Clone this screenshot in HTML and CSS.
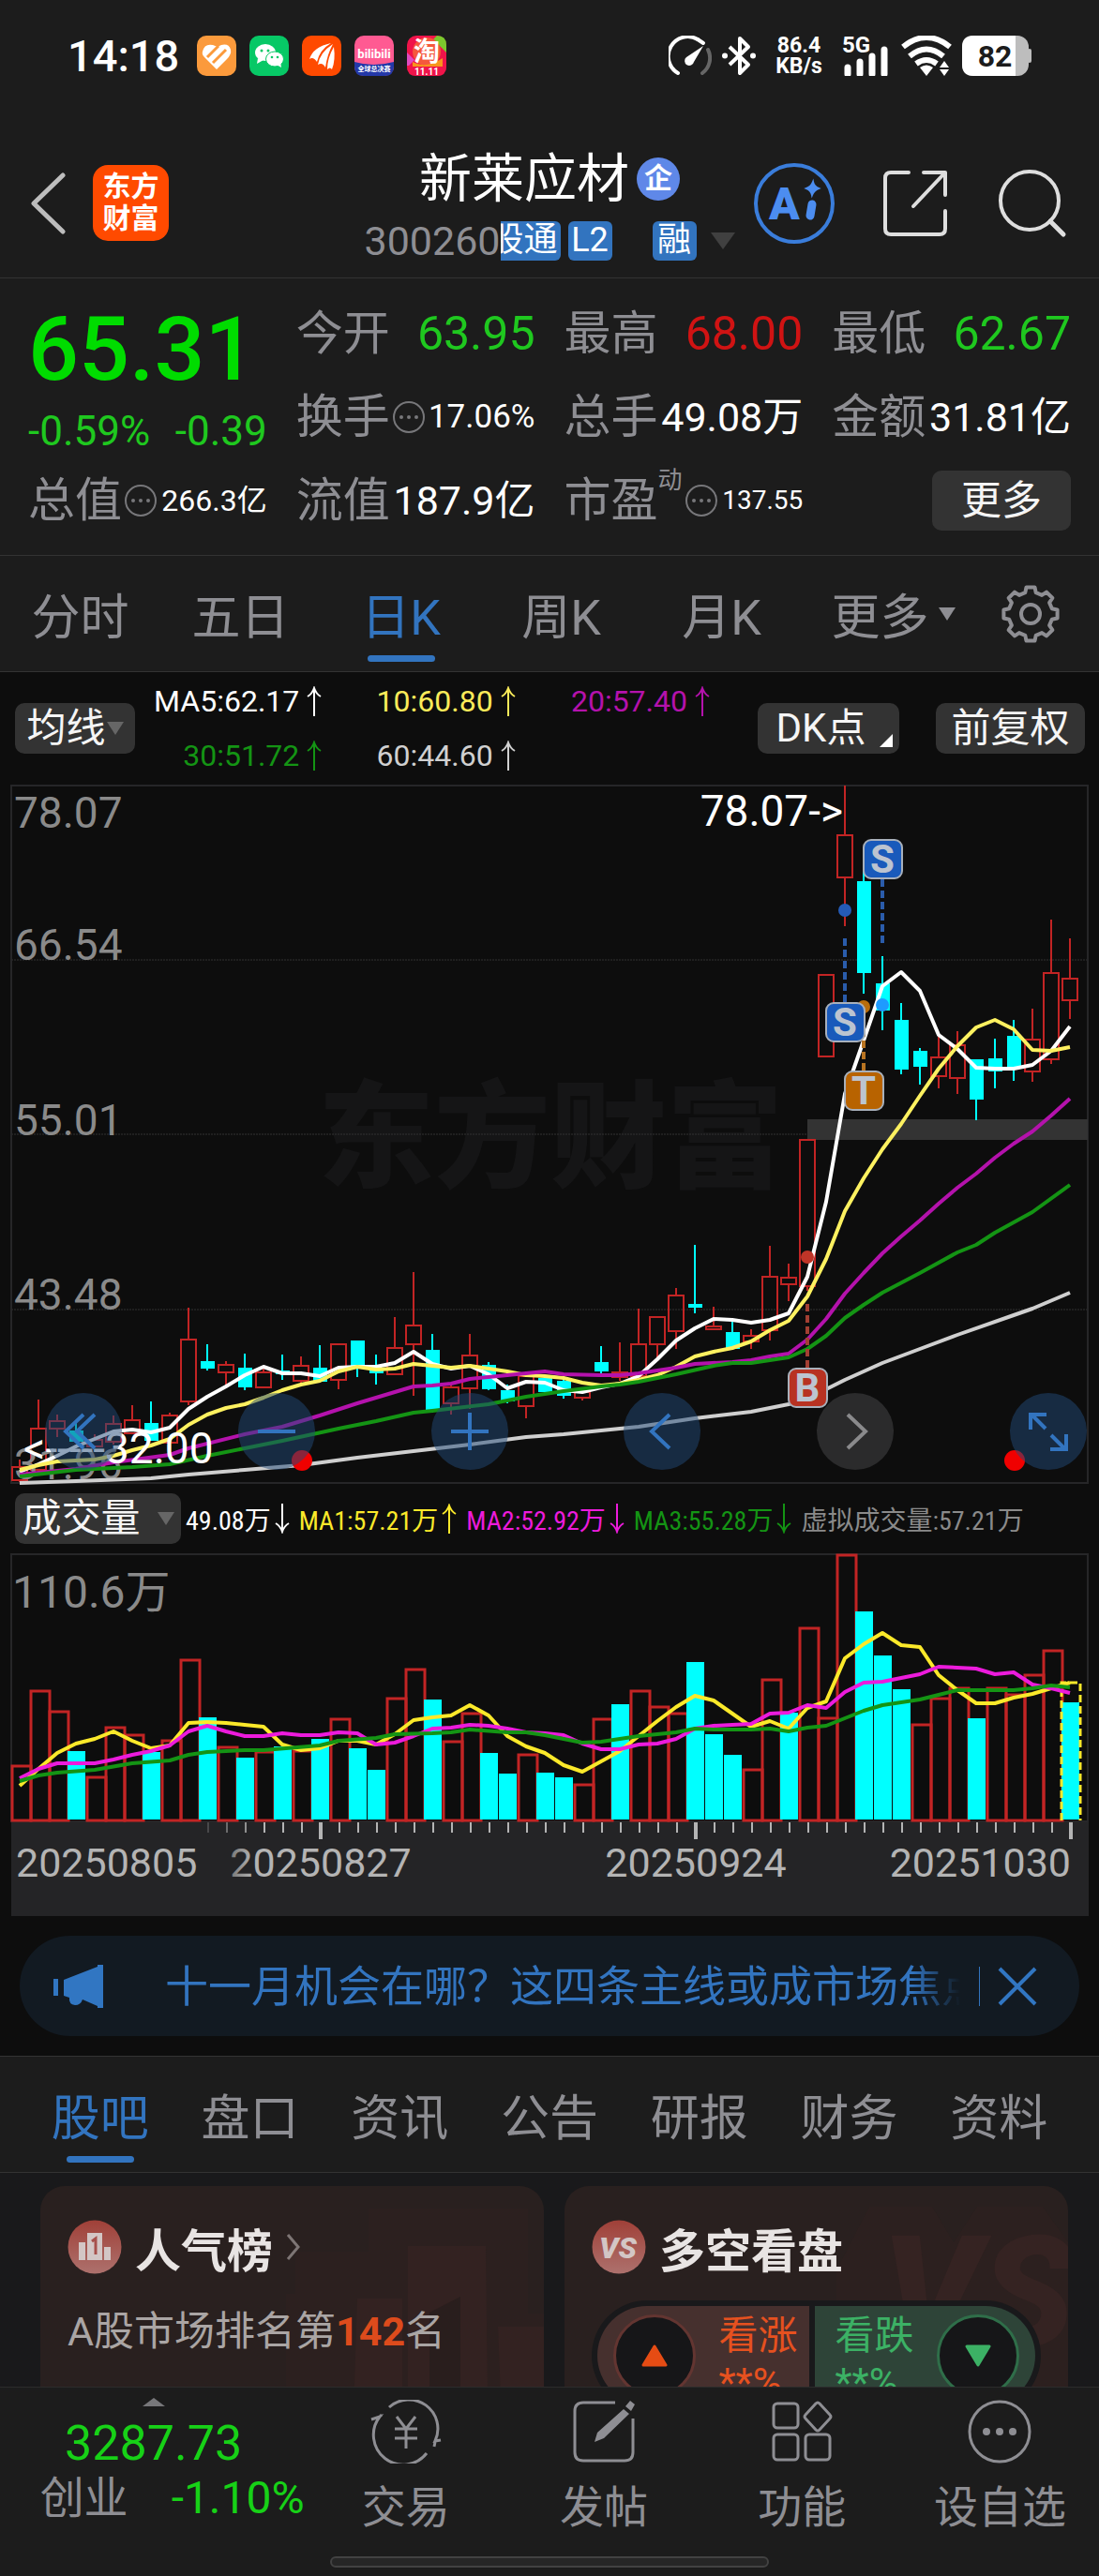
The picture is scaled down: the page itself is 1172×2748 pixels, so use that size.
FILE: index.html
```html
<!DOCTYPE html>
<html lang="zh-CN">
<head>
<meta charset="utf-8">
<meta name="viewport" content="width=device-width, initial-scale=1">
<title>新莱应材 300260</title>
<link rel="stylesheet" href="styles.css">
</head>
<body>
<svg class="defs" aria-hidden="true">
  <symbol id="up" viewBox="0 0 16 32"><path d="M8 32V2M1 11Q6 8 8 2Q10 8 15 11" fill="none" stroke="currentColor" stroke-width="2"/></symbol>
  <symbol id="down" viewBox="0 0 16 32"><path d="M8 0V30M1 21Q6 24 8 30Q10 24 15 21" fill="none" stroke="currentColor" stroke-width="2"/></symbol>
  <symbol id="info" viewBox="0 0 36 36"><circle cx="18" cy="18" r="16" fill="none" stroke="#77777a" stroke-width="2"/><g fill="#77777a"><circle cx="10" cy="18" r="2"/><circle cx="18" cy="18" r="2"/><circle cx="26" cy="18" r="2"/></g></symbol>
</svg>

<div class="status">
  <span class="clock">14:18</span>
  <div class="apps">
    <svg viewBox="0 0 42 43"><rect width="42" height="43" rx="10" fill="#fb9a3c"/><path d="M6 17Q8 8 17 10L22 12L26 10Q34 8 36 15Q37 20 32 25L21 36L8 23Q5 20 6 17Z" fill="#fff"/><path d="M11 23L23 11M17 29L31 15" stroke="#fb9a3c" stroke-width="3"/></svg>
    <svg viewBox="0 0 42 43"><rect width="42" height="43" rx="10" fill="#07c866"/><ellipse cx="17" cy="18" rx="11" ry="9" fill="#fff"/><path d="M9 24L8 30L15 26" fill="#fff"/><ellipse cx="27" cy="25" rx="9.500" ry="8" fill="#fff" stroke="#07c866"/><path d="M29 31L34 34L33 28" fill="#fff"/><g fill="#07c866"><circle cx="13" cy="16" r="1.500"/><circle cx="20" cy="16" r="1.500"/><circle cx="24" cy="23" r="1.300"/><circle cx="30" cy="23" r="1.300"/></g></svg>
    <svg viewBox="0 0 42 43"><rect width="42" height="43" rx="10" fill="#ff4a00"/><path d="M8 25Q12 12 31 8Q19 15 16 28Q12 22 8 25ZM17 31Q19 18 33 9Q27 20 25 34Q22 28 17 31ZM27 36Q27 24 34 12Q36 26 32 36Q30 33 27 36Z" fill="#fff"/></svg>
    <svg viewBox="0 0 42 43"><rect width="42" height="43" rx="10" fill="#ff5a92"/><path d="M0 28Q20 34 42 28V33Q42 43 32 43H10Q0 43 0 33Z" fill="#2338a8"/><text x="21" y="24" class="bili">bilibili</text><text x="21" y="38" class="bili-sub">全球总决赛</text></svg>
    <svg viewBox="0 0 42 43"><rect width="42" height="43" rx="10" fill="#f0144a"/><path d="M32 0Q42 0 42 10V18L28 4Z" fill="#7bc82d"/><path d="M0 18L8 26L2 32H0Z" fill="#e04bc0"/><circle cx="21" cy="17" r="15" fill="#f5583c"/><path d="M6 28Q20 36 38 24V34H6Z" fill="#f7951d"/><text x="21" y="27" class="tao">淘</text><path d="M0 33H42Q42 43 32 43H10Q0 43 0 33Z" fill="#f0144a"/><text x="21" y="42" class="tao-sub">11.11</text></svg>
  </div>
  <div class="signals">
    <svg class="gauge" viewBox="0 0 46 43"><path d="M10 40A20 20 0 0 1 31 4" fill="none" stroke="#fff" stroke-width="4" stroke-linecap="round"/><path d="M31 4L37 8" stroke="#fff" stroke-width="4" stroke-linecap="round"/><path d="M42 15A20 20 0 0 1 36 40" fill="none" stroke="#666" stroke-width="4" stroke-linecap="round"/><path d="M37 11L19 23A5 5 0 1 0 27 28Z" fill="#fff"/></svg>
    <svg class="bt" viewBox="0 0 36 43"><path d="M8 12L28 31L19 40V3L28 12L8 31" fill="none" stroke="#fff" stroke-width="4" stroke-linejoin="round"/><g fill="#fff"><circle cx="3" cy="21.500" r="3"/><circle cx="33" cy="21.500" r="3"/></g></svg>
    <span class="speed">86.4<br>KB/s</span>
    <svg class="cell" viewBox="0 0 52 43"><text x="0" y="18">5G</text><path d="M6 41V34M19 41V28M32 41V22M45 41V15" stroke="#fff" stroke-width="7" stroke-linecap="round"/></svg>
    <svg class="wifi" viewBox="0 0 54 43"><g fill="none" stroke="#fff" stroke-width="6"><path d="M2 12Q27 -8 52 12"/><path d="M9 22Q27 7 45 22"/><path d="M16 30Q27 22 38 30"/></g><path d="M20 34Q27 29 34 34L27 43ZM41 34L46 27L51 34ZM41 36L46 43L51 36Z" fill="#fff"/></svg>
    <svg class="battery" viewBox="0 0 74 43"><rect width="71" height="43" rx="12" fill="#bdbdbd"/><rect x="70" y="14" width="4" height="15" rx="2" fill="#bdbdbd"/><path d="M12 0H57V43H12Q0 43 0 31V12Q0 0 12 0Z" fill="#fff"/><text x="35" y="33">82</text></svg>
  </div>
</div>

<header class="header">
  <div class="header-left">
    <button class="plain" aria-label="返回"><svg width="38" height="66" viewBox="0 0 38 66"><path d="M35 3L4 33L35 63" fill="none" stroke="#bdbdbd" stroke-width="5" stroke-linecap="round" stroke-linejoin="round"/></svg></button>
    <a class="logo" href="#">东方<br>财富</a>
  </div>
  <div class="header-mid">
    <h1>新莱应材<span class="ent">企</span></h1>
    <div class="code">300260<span class="tag tag-cut"><span>股通</span></span><span class="tag">L2</span><span class="tag tag-rong">融</span><i class="tri tri-code"></i></div>
  </div>
  <div class="header-right">
    <button class="plain" aria-label="AI"><svg width="86" height="86" viewBox="0 0 86 86"><circle cx="43" cy="43" r="41" fill="none" stroke="#3a7ddb" stroke-width="4"/><text x="16" y="60" class="ai">A</text><path d="M62 44L60 56" stroke="#4c8df0" stroke-width="9" stroke-linecap="round"/><path d="M63 20Q64 25 69 27Q64 29 62 34Q61 29 56 27Q61 25 63 20Z" fill="#4c8df0" stroke="#4c8df0" stroke-width="2"/></svg></button>
    <button class="plain" aria-label="分享"><svg width="72" height="72" viewBox="0 0 72 72"><path d="M28 3H9Q3 3 3 9V63Q3 69 9 69H61Q67 69 67 63V44M44 3H67V27M67 3L33 39" fill="none" stroke="#dedede" stroke-width="4" stroke-linecap="round" stroke-linejoin="round"/></svg></button>
    <button class="plain" aria-label="搜索"><svg width="74" height="74" viewBox="0 0 74 74"><circle cx="34" cy="34" r="31" fill="none" stroke="#dedede" stroke-width="4"/><path d="M56 56L70 70" stroke="#dedede" stroke-width="5" stroke-linecap="round"/></svg></button>
  </div>
</header>

<main>
<section class="quote">
  <div class="last">
    <strong>65.31</strong>
    <div class="change"><span>-0.59%</span><span>-0.39</span></div>
  </div>
  <div class="stat"><span>今开</span><b class="green big">63.95</b></div>
  <div class="stat"><span>最高</span><b class="red big">68.00</b></div>
  <div class="stat"><span>最低</span><b class="green big">62.67</b></div>
  <div class="stat"><span>换手<svg class="info"><use href="#info"/></svg></span><b class="small">17.06%</b></div>
  <div class="stat"><span>总手</span><b>49.08万</b></div>
  <div class="stat"><span>金额</span><b>31.81亿</b></div>
  <div class="stat"><span>总值<svg class="info"><use href="#info"/></svg></span><b class="smaller">266.3亿</b></div>
  <div class="stat"><span>流值</span><b>187.9亿</b></div>
  <div class="stat"><span>市盈<sup>动</sup><svg class="info"><use href="#info"/></svg></span><b class="tiny">137.55</b></div>
  <div class="stat stat-more"><button class="chip chip-more">更多</button></div>
</section>

<nav class="periods">
  <button>分时</button><button>五日</button><button class="active">日K</button><button>周K</button><button>月K</button>
  <button class="more">更多<i class="tri"></i></button>
  <button aria-label="设置"><svg width="62" height="62" viewBox="-31 -31 62 62"><path d="M-5.700-22.800L-4.500-28.600H4.500L5.700-22.800L12.100-20.100L17-23.400L23.400-17L20.100-12.100L22.800-5.700L28.600-4.500V4.500L22.800 5.700L20.100 12.100L23.400 17L17 23.400L12.100 20.100L5.700 22.800L4.500 28.600H-4.500L-5.700 22.800L-12.100 20.100L-17 23.400L-23.400 17L-20.100 12.100L-22.800 5.700L-28.600 4.500V-4.500L-22.800-5.700L-20.100-12.100L-23.400-17L-17-23.400L-12.100-20.100Z" fill="none" stroke="#8e8e93" stroke-width="4" stroke-linejoin="round"/><circle r="10" fill="none" stroke="#8e8e93" stroke-width="4"/></svg></button>
</nav>

<div class="ma-row">
  <button class="chip">均线<i class="tri"></i></button>
  <div class="ma-list">
    <span class="c-white">MA5:62.17<svg class="arrow"><use href="#up"/></svg></span>
    <span class="c-yellow">10:60.80<svg class="arrow"><use href="#up"/></svg></span>
    <span class="c-purple">20:57.40<svg class="arrow"><use href="#up"/></svg></span>
    <span class="c-green">30:51.72<svg class="arrow"><use href="#up"/></svg></span>
    <span class="c-gray">60:44.60<svg class="arrow"><use href="#up"/></svg></span>
  </div>
  <button class="chip chip-dk">DK点<i class="corner"></i></button>
  <button class="chip chip-fq">前复权</button>
</div>

<div class="kchart">
  <svg viewBox="0 830 1172 760" role="img" aria-label="日K线">
    <text class="watermark" x="587" y="1257">东方财富</text>
    <g fill="none" stroke="#262628"><path d="M12 1024H1160M12 1210H1160M12 1397H1160" stroke="#333" stroke-dasharray="2 1"/><rect x="12" y="838" width="1148" height="744" stroke-width="2"/></g>
    <rect x="861" y="1194" width="299" height="22" fill="#333"/>
    <g id="candles"></g>
    <g class="axis"><text x="15" y="883">78.07</text><text x="15" y="1024">66.54</text><text x="15" y="1211">55.01</text><text x="15" y="1397">43.48</text><text x="15" y="1578">31.96</text></g>
    <g id="averages"></g>
    <g class="peak"><text x="899" y="881" text-anchor="end">78.07-&gt;</text><text x="25" y="1561">&lt;-----32.00</text></g>
    <g class="marks">
      <path d="M941 938V1006M901 1001V1069" stroke="#2a5cab"/><path d="M921 1074V1142" stroke="#b87422"/><path d="M861 1391V1459" stroke="#a33f33"/>
      <circle cx="901" cy="971" r="7" fill="#245bb8"/><circle cx="921" cy="1074" r="7" fill="#b96d0c"/><circle cx="941" cy="1072" r="7" fill="#1e9bff"/><circle cx="861" cy="1341" r="7" fill="#c03528"/>
      <rect x="921" y="896" width="41" height="41" rx="8" fill="#195abb"/><text x="941" y="931">S</text>
      <rect x="881" y="1070" width="41" height="41" rx="8" fill="#195abb"/><text x="901" y="1105">S</text>
      <rect x="901" y="1143" width="41" height="41" rx="8" fill="#b86300"/><text x="921" y="1178">T</text>
      <rect x="841" y="1460" width="41" height="41" rx="8" fill="#b83222"/><text x="861" y="1495">B</text>
    </g>
    <circle cx="322" cy="1558" r="11" fill="#f00000"/><circle cx="1082" cy="1558" r="11" fill="#f00000"/>
  </svg>
  <div class="tools">
    <button aria-label="更早"><svg viewBox="0 0 82 82"><path d="M41 23L22 41L41 59M53 23L34 41L53 59"/></svg></button>
    <button aria-label="缩小"><svg viewBox="0 0 82 82"><path d="M21 41H61"/></svg></button>
    <button aria-label="放大"><svg viewBox="0 0 82 82"><path d="M21 41H61M41 21V61"/></svg></button>
    <button aria-label="左移"><svg viewBox="0 0 82 82"><path d="M49 23L30 41L49 59"/></svg></button>
    <button class="off" aria-label="右移"><svg viewBox="0 0 82 82"><path d="M33 23L52 41L33 59"/></svg></button>
    <button aria-label="全屏"><svg viewBox="0 0 82 82"><path d="M22 39V23H39M23 23L38 38M60 44V60H43M59 60L44 45"/></svg></button>
  </div>
</div>

<div class="vol-row">
  <button class="chip chip-vol">成交量<i class="tri"></i></button>
  <span class="c-white">49.08万<svg class="arrow"><use href="#down"/></svg></span>
  <span class="v-yellow">MA1:57.21万<svg class="arrow"><use href="#up"/></svg></span>
  <span class="v-pink">MA2:52.92万<svg class="arrow"><use href="#down"/></svg></span>
  <span class="c-green">MA3:55.28万<svg class="arrow"><use href="#down"/></svg></span>
  <span class="v-gray">虚拟成交量:57.21万</span>
</div>

<svg class="vchart" viewBox="0 1650 1172 394" role="img" aria-label="成交量">
  <defs><linearGradient id="fade"><stop offset="0" stop-color="#777"/><stop offset=".13" stop-color="#b4b4b4"/></linearGradient></defs>
  <rect x="12" y="1658" width="1148" height="285" fill="none" stroke="#262628" stroke-width="2"/>
  <rect x="12" y="1944" width="1149" height="100" fill="#242426"/>
  <g id="volumes"></g>
  <text class="vol-max" x="13" y="1715">110.6万</text>
  <g id="ticks"></g>
  <g class="dates"><text x="17" y="2002">20250805</text><text x="342" y="2002" text-anchor="middle" fill="url(#fade)">20250827</text><text x="742" y="2002" text-anchor="middle">20250924</text><text x="1142" y="2002" text-anchor="end">20251030</text></g>
</svg>

<div class="notice">
  <svg width="56" height="48" viewBox="0 0 56 48"><path d="M1 16H6V34H1ZM12 17L48 3V1H54V47H48V45L32 38Q30 44 24 44Q17 43 18 36L12 34Z" fill="#3176c2"/></svg>
  <a href="#">十一月机会在哪？这四条主线或成市场焦点</a>
  <button class="plain" aria-label="关闭"><svg width="42" height="42" viewBox="0 0 42 42"><path d="M2 2L40 40M40 2L2 40" stroke="#3176c2" stroke-width="4"/></svg></button>
</div>

<nav class="topics">
  <button class="active">股吧</button><button>盘口</button><button>资讯</button><button>公告</button><button>研报</button><button>财务</button><button>资料</button>
</nav>

<section class="cards">
  <article class="card">
    <svg class="card-art" viewBox="0 0 537 300"><path d="M272 70H350V24H520V136H537V300H262V115H272Z" fill="#2c201f"/><path d="M338 120H386V300H332ZM392 64H475L478 300H392ZM488 150H537V300H494Z" fill="#332221"/><path d="M415 135L448 118V300H415Z" fill="#291e1d"/></svg>
    <h2><svg width="58" height="58" viewBox="0 0 58 58"><circle cx="29" cy="29" r="28.500" fill="url(#ball)"/><path d="M12 24H19V43H12ZM21 14H37V43H21ZM39 29H46V43H39Z" fill="#d3c6c5"/><path d="M26 23L30 20V37" fill="none" stroke="#a7504b" stroke-width="3"/></svg>人气榜<svg width="16" height="30" viewBox="0 0 16 30"><path d="M2 2L13 15L2 28" fill="none" stroke="#7d7574" stroke-width="3"/></svg></h2>
    <p>A股市场排名第<b>142</b>名</p>
  </article>
  <article class="card">
    <svg class="card-art" viewBox="0 0 537 300"><defs><linearGradient id="ball" x1="0" x2="0" y1="0" y2="1"><stop stop-color="#a04038"/><stop offset="1" stop-color="#ad716d"/></linearGradient></defs><path d="M325 22H392L415 60L440 22H510L537 60V300H290V90Z" fill="#2c201f"/><text class="vs-art" x="338" y="170">VS</text></svg>
    <h2><svg width="58" height="58" viewBox="0 0 58 58"><circle cx="29" cy="29" r="28.500" fill="url(#ball)"/><text class="vs" x="28" y="41">VS</text></svg>多空看盘</h2>
    <div class="vote">
      <button class="rise"><i><svg width="28" height="24" viewBox="0 0 28 24"><path d="M14 2L26 22H2Z" fill="#e64c14" stroke="#e64c14" stroke-width="3" stroke-linejoin="round"/></svg></i><span>看涨<br>**%</span></button>
      <button class="fall"><span>看跌<br>**%</span><i><svg width="28" height="24" viewBox="0 0 28 24"><path d="M14 22L26 2H2Z" fill="#3cb165" stroke="#3cb165" stroke-width="3" stroke-linejoin="round"/></svg></i></button>
    </div>
  </article>
</section>
</main>

<footer class="dock">
  <div class="dock-row">
    <button class="index"><i class="caret"></i><span>3287.73</span><span class="index-row"><em>创业</em>-1.10%</span></button>
    <button><svg width="76" height="68" viewBox="0 0 76 68"><g fill="none" stroke="#8e8e93" stroke-width="3"><path d="M20 8A31 31 0 0 1 69 44L75 43M69 45L68 50M60 57A31 31 0 0 1 10 18L1 21M10 18L12 16"/><path d="M28 18L38 31L48 18M38 31V52M26 31H50M26 41H50"/></g></svg>交易</button>
    <button><svg width="68" height="68" viewBox="0 0 68 68"><path d="M46 3H12Q3 3 3 12V56Q3 65 12 65H56Q65 65 65 56V20" fill="none" stroke="#8e8e93" stroke-width="3"/><path d="M57 7L62 1L67 5L63 12ZM55 10L61 15L34 41L24 45L27 35Z" fill="#8e8e93"/></svg>发帖</button>
    <button><svg width="68" height="68" viewBox="0 0 68 68"><g fill="none" stroke="#8e8e93" stroke-width="3"><rect x="4" y="4" width="26" height="26" rx="4"/><rect x="4" y="37" width="26" height="27" rx="4"/><rect x="38" y="37" width="26" height="27" rx="4"/><path d="M49 4Q51 2 53 4L64 16Q66 18 64 20L53 32Q51 34 49 32L38 20Q36 18 38 16Z"/></g></svg>功能</button>
    <button><svg width="68" height="68" viewBox="0 0 68 68"><circle cx="34" cy="34" r="32" fill="none" stroke="#8e8e93" stroke-width="3"/><g fill="#8e8e93"><circle cx="20" cy="34" r="4"/><circle cx="34" cy="34" r="4"/><circle cx="48" cy="34" r="4"/></g></svg>设自选</button>
  </div>
  <div class="home-bar"></div>
</footer>
<script src="chart.js"></script>
</body>
</html>
```
FILE: styles.css
```css
* { box-sizing: border-box; }
body {
  margin: 0;
  min-height: 100vh;
  display: flex;
  flex-direction: column;
  background: #0d0d0d;
  color: #fff;
  font-family: Roboto, "Noto Sans CJK SC", sans-serif;
}
main { flex: 1; display: flex; flex-direction: column; }
h1, h2, p { margin: 0; font-weight: 400; }
i, em { font-style: normal; }
svg { display: block; flex: none; }
button { margin: 0; padding: 0; border: 0; background: none; color: inherit; font: inherit; cursor: pointer; }
a { color: inherit; text-decoration: none; }
.defs { position: absolute; width: 0; height: 0; }
.plain { display: block; }

.tri { width: 0; height: 0; border: 9px solid transparent; border-top: 14px solid #8e8e93; border-bottom: 0; }

/* status bar */
.status { display: flex; align-items: center; height: 119px; padding: 0 72px; background: #1c1c1c; }
.clock { width: 138px; font-size: 47px; font-weight: 500; line-height: 56px; }
.apps { display: flex; gap: 14px; }
.apps svg { width: 42px; height: 43px; }
.bili { font-size: 13px; font-weight: 700; fill: #fff; text-anchor: middle; }
.bili-sub { font-size: 7px; font-weight: 700; fill: #fff; text-anchor: middle; }
.tao { font-size: 28px; font-weight: 700; fill: #fff; text-anchor: middle; }
.tao-sub { font-size: 10px; font-weight: 700; fill: #fff; text-anchor: middle; }
.signals { display: flex; align-items: center; gap: 11px; margin-left: auto; }
.gauge { width: 46px; height: 43px; }
.bt { width: 36px; height: 43px; }
.speed { width: 70px; font-size: 23px; font-weight: 700; line-height: 22px; text-align: center; }
.cell { width: 52px; height: 43px; font-size: 24px; font-weight: 700; fill: #fff; }
.wifi { width: 54px; height: 43px; }
.battery { width: 74px; height: 43px; font-size: 32px; font-weight: 700; fill: #1c1c1c; text-anchor: middle; }

/* title bar */
.header { display: grid; grid-template-columns: 1fr auto 1fr; align-items: center; height: 178px; padding-top: 18px; background: #1c1c1c; border-bottom: 1px solid #333; }
.header-left { display: flex; align-items: center; gap: 29px; padding-left: 32px; }
.logo { width: 81px; height: 81px; padding-top: 6px; border-radius: 16px; background: #ff4a00; font-size: 30px; font-weight: 700; line-height: 34px; text-align: center; }
.header-mid { align-self: end; padding-bottom: 16px; }
h1 { display: flex; justify-content: center; align-items: center; gap: 8px; font-size: 56px; line-height: 62px; }
.ent { width: 46px; height: 46px; border-radius: 50%; background: #5f88e8; font-size: 30px; font-weight: 700; line-height: 44px; text-align: center; }
.code { display: flex; align-items: center; margin-top: 12px; color: #8e8e93; font-size: 43px; line-height: 46px; }
.tag { width: 47px; height: 42px; margin-right: 8px; border-radius: 6px; background: #3274bf; color: #fff; font-size: 36px; line-height: 41px; text-align: center; }
.tag-cut { display: flex; justify-content: flex-end; width: 64px; padding-right: 3px; border-radius: 0 6px 6px 0; overflow: hidden; }
.tag-cut span { flex: none; }
.tag-rong { margin: 0 15px 0 35px; }
.tri-code { border-width: 18px 13px 0; border-top-color: #404040; }
.header-right { display: flex; justify-content: flex-end; align-items: center; gap: 51px; padding-right: 34px; }
.ai { font-size: 48px; font-weight: 900; fill: #4c8df0; }

/* quote figures */
.quote { display: grid; grid-template-columns: repeat(4, minmax(0, 1fr)); grid-auto-rows: 89px; column-gap: 31px; padding: 14px 30px; background: #1c1c1c; border-bottom: 1px solid #333; }
.last { grid-row: span 2; color: #00dc00; }
.last strong { display: block; padding-top: 8px; font-size: 95px; font-weight: 500; line-height: 108px; }
.change { display: flex; justify-content: space-between; color: #1fc81f; font-size: 44px; line-height: 66px; }
.stat { display: flex; justify-content: space-between; align-items: center; color: #8e8e93; font-size: 50px; line-height: 60px; white-space: nowrap; }
.stat span { display: flex; align-items: center; }
.stat b { color: #fff; font-size: 43px; font-weight: 400; }
.stat .big { font-size: 50px; }
.stat .small { font-size: 35px; }
.stat .smaller { font-size: 32px; }
.stat .tiny { font-size: 28px; }
.stat .green { color: #1fc81f; }
.stat .red { color: #d01313; }
.info { width: 36px; height: 36px; margin-left: 2px; }
.stat sup { align-self: flex-start; height: 60px; margin-top: -22px; font-size: 26px; }
.stat-more { justify-content: flex-end; }
.chip { display: flex; justify-content: center; align-items: center; height: 54px; border-radius: 10px; background: #333; color: #f5f5f5; font-size: 42px; line-height: 54px; white-space: nowrap; }
.chip .tri { border-top-color: #666; }
.chip-more { width: 148px; height: 64px; font-size: 43px; }

/* period tabs */
.periods { display: grid; grid-template-columns: repeat(6, 171fr) 146fr; height: 124px; background: #1c1c1c; border-bottom: 1px solid #333; }
.periods button, .topics button { position: relative; display: flex; justify-content: center; align-items: center; color: #8e8e93; font-size: 52px; }
.periods .more { gap: 10px; padding-left: 24px; }
.periods .active, .topics .active { color: #3274bf; }
.active::after { content: ""; position: absolute; bottom: 10px; left: 50%; width: 72px; height: 7px; margin-left: -36px; border-radius: 4px; background: #3274bf; }

/* moving-average legend */
.ma-row { display: flex; align-items: center; height: 113px; padding: 6px 15px 0 16px; }
.ma-row .chip { width: 128px; }
.ma-row .chip .tri { margin-left: 1px; }
.ma-list { flex: 1; display: grid; grid-template-columns: 199fr 206fr 207fr; margin-right: 51px; font-size: 32px; line-height: 58px; }
.ma-list span { display: flex; justify-content: flex-end; align-items: center; gap: 8px; }
.arrow { width: 16px; height: 32px; }
.ma-row .chip-dk { position: relative; width: 151px; margin-right: 39px; padding-right: 16px; }
.ma-row .chip-fq { width: 159px; }
.corner { position: absolute; right: 7px; bottom: 7px; border: 7px solid #fff; border-top-color: transparent; border-left-color: transparent; }
.c-white { color: #fff; }
.c-yellow { color: #fbeb5a; }
.c-purple { color: #b412ac; }
.c-green { color: #149414; }
.c-gray { color: #d0d0d0; }

/* charts */
.kchart { position: relative; }
.kchart > svg, .vchart { width: 100%; height: auto; }
.watermark { font-size: 124px; font-weight: 900; fill: #151516; text-anchor: middle; }
.axis { font-size: 46px; fill: #8a8a8a; }
.vol-max { font-size: 48px; fill: #8a8a8a; }
.peak { font-size: 46px; fill: #fff; }
.dates { font-size: 43px; fill: #b4b4b4; }
.marks path { stroke-width: 4; stroke-dasharray: 8 4; }
.marks rect { stroke: #a8b0bb; stroke-width: 2; }
.marks text { font-size: 42px; font-weight: 700; fill: #bcc4d0; text-anchor: middle; }
.tools { position: absolute; right: 13px; bottom: 22px; left: 48px; display: flex; justify-content: space-between; }
.tools button { width: 82px; height: 82px; border-radius: 50%; background: rgba(34, 73, 119, .5); }
.tools path { fill: none; stroke: #3274bf; stroke-width: 4; }
.tools .off { background: #2b2b2c; }
.tools .off path { stroke: #8a8a8c; }

.vol-row { display: flex; align-items: center; gap: 10px; height: 60px; padding-left: 16px; font-family: "Roboto Condensed", "Liberation Sans Narrow", Roboto, "Noto Sans CJK SC", sans-serif; font-size: 28px; white-space: nowrap; }
.vol-row span { display: flex; align-items: center; gap: 4px; }
.chip-vol { width: 177px; gap: 18px; margin-right: -5px; font-family: Roboto, "Noto Sans CJK SC", sans-serif; }
.v-yellow { color: #fbe92a; }
.v-pink { color: #ec1bdc; }
.v-gray { color: #8a8a8a; }

/* notice */
.notice { display: flex; align-items: center; height: 107px; margin: 21px; padding: 0 45px 0 35px; border-radius: 54px; background: #121a22; color: #3274bf; }
.notice a { flex: 1; min-width: 0; height: 60px; margin: 0 20px 0 64px; overflow: hidden; font-size: 46px; line-height: 60px; white-space: nowrap; -webkit-mask-image: linear-gradient(to right, #000 94%, transparent); mask-image: linear-gradient(to right, #000 94%, transparent); }
.notice .plain { padding-left: 19px; border-left: 1px solid #3274bf; }

/* topic tabs */
.topics { display: grid; grid-template-columns: repeat(7, 1fr); height: 125px; padding: 0 27px; background: #1c1c1c; border-top: 1px solid #333; border-bottom: 1px solid #333; }

/* cards */
.cards { flex: 1 1 228px; display: grid; grid-template-columns: 1fr 1fr; gap: 22px; height: 228px; padding: 14px 33px 0 43px; overflow: hidden; background: #19191b; }
.card { position: relative; height: 300px; padding: 30px 29px; border-radius: 26px; background: #29201f; overflow: hidden; }
.card-art { position: absolute; top: 0; left: 0; width: 100%; }
.vs-art { font-size: 165px; font-weight: 900; font-style: italic; fill: #352322; }
.card h2 { position: relative; display: flex; align-items: center; gap: 14px; height: 70px; color: #e8e4e3; font-size: 49px; font-weight: 700; }
.vs { font-size: 32px; font-weight: 900; font-style: italic; fill: #d3c6c5; text-anchor: middle; }
.card p { position: relative; margin-top: 25px; color: #aaa5a4; font-size: 43px; line-height: 60px; white-space: nowrap; }
.card p b { color: #dd4b1c; }
.vote { position: relative; display: flex; gap: 6px; height: 118px; margin: 22px 0 0; padding: 6px; border-radius: 60px; background: #19191b; }
.vote button { flex: 1; display: flex; align-items: center; font-size: 42px; line-height: 50px; text-align: left; }
.vote span { padding-top: 8px; }
.vote i { display: flex; justify-content: center; align-items: center; width: 88px; height: 88px; border: 3px solid #633531; border-radius: 50%; background: #161618; }
.rise { justify-content: space-between; padding: 0 12px 0 17px; border-radius: 54px 0 0 54px; background: #46302e; color: #e6511f; }
.fall { justify-content: space-between; padding: 0 17px 0 22px; border-radius: 0 54px 54px 0; background: #2e4438; color: #3cb165; }
.fall i { border-color: #2f6e49; }

/* bottom dock */
.dock { background: #1c1c1c; border-top: 1px solid #2c2c2c; }
.dock-row { display: grid; grid-template-columns: 327fr repeat(4, 211fr); }
.dock-row button { display: flex; flex-direction: column; align-items: center; height: 158px; padding-top: 13px; color: #8e8e93; font-size: 47px; line-height: 60px; white-space: nowrap; }
.dock-row svg { margin-bottom: 17px; }
.dock-row .index { padding-top: 11px; color: #17d117; font-size: 52px; line-height: 58px; }
.caret { margin-bottom: 11px; border: 12px solid transparent; border-top: 0; border-bottom: 9px solid #77777a; }
.index-row { display: flex; gap: 46px; padding-left: 40px; font-size: 48px; }
.index-row em { color: #8e8e93; font-size: 47px; }
.home-bar { width: 40%; height: 12px; margin: 22px auto 9px; border: 2px solid #424242; border-radius: 6px; background: #262626; }
```
FILE: chart.js
```js
// One entry per trading day: colour (r = up, c = down), high, body top, body bottom, low, volume top.
const days = [
  ['r',1557,1565,1579,1581,1883],['r',1493,1524,1568,1568,1803],['r',1509,1516,1524,1533,1825],['c',1518,1526,1538,1538,1868],
  ['r',1530,1536,1543,1543,1895],['r',1510,1519,1538,1541,1842],['r',1499,1515,1529,1529,1850],['c',1495,1518,1537,1537,1869],
  ['r',1507,1510,1539,1539,1856],['r',1395,1429,1495,1499,1770],['c',1434,1452,1460,1462,1832],['r',1452,1456,1464,1477,1863],
  ['c',1444,1459,1480,1483,1875],['r',1457,1464,1480,1480,1868],['c',1445,1462,1466,1472,1863],['r',1447,1457,1473,1476,1867],
  ['c',1435,1459,1474,1474,1855],['r',1434,1434,1472,1482,1833],['c',1430,1430,1457,1469,1865],['c',1445,1462,1465,1477,1888],
  ['r',1405,1438,1466,1467,1811],['r',1357,1414,1434,1489,1780],['c',1423,1440,1504,1507,1813],['r',1477,1480,1497,1509,1857],
  ['r',1423,1446,1481,1503,1827],['c',1453,1456,1482,1483,1870],['c',1477,1483,1495,1497,1892],['r',1468,1468,1500,1513,1871],
  ['c',1469,1470,1485,1485,1891],['c',1472,1473,1489,1492,1896],['r',1485,1485,1491,1494,1903],['c',1436,1453,1463,1466,1833,'r'],
  ['r',1432,1464,1469,1473,1818,'c'],['r',1396,1434,1468,1468,1803],['r',1404,1405,1434,1448,1820],['r',1374,1382,1420,1439,1827],
  ['c',1328,1391,1395,1401,1773],['r',1394,1415,1418,1419,1850,'c'],['c',1409,1421,1439,1439,1872],['r',1418,1425,1431,1439,1887],
  ['r',1329,1362,1419,1430,1791],['r',1348,1363,1370,1388,1827,'c'],['r',1216,1216,1372,1377,1736],['r',1040,1040,1127,1127,1832],
  ['r',838,891,936,988,1658],['c',924,940,1038,1060,1719],['c',1020,1049,1078,1099,1766],['c',1070,1088,1141,1146,1802],
  ['c',1118,1121,1138,1157,1839,'r'],['r',1106,1128,1148,1161,1811],['r',1100,1115,1150,1167,1800],['c',1130,1130,1173,1195,1833],
  ['c',1108,1129,1143,1161,1800,'r'],['c',1088,1105,1140,1153,1807,'r'],['r',1076,1109,1143,1154,1786],['r',981,1038,1130,1135,1760],
  ['r',1001,1044,1067,1087,1816,'c']
];
const RED = '#c22424', CYAN = '#00ffff';
const x = i => 21 + 20 * i;
const rows = a => a.map((y, i) => [i, y]);

const priceLines = [
  ['#cfcfcf', [[0,1582],[3,1580],[7,1577],[9,1573],[12,1568],[15,1563],[18,1555],[21,1548],[24,1541],[27,1533],[29,1530],[33,1522],[36,1513],[39,1506],[41,1498],[42,1492],[43,1482],[44,1472],[46,1454],[48,1439],[50,1424],[53,1403],[54,1396],[56,1379]]],
  ['#fff', rows([1570,1562,1553,1543,1535,1527,1525,1528,1523,1503,1490,1479,1467,1458,1465,1465,1468,1459,1458,1458,1454,1442,1455,1460,1457,1466,1481,1474,1475,1483,1485,1480,1476,1468,1450,1430,1417,1407,1408,1411,1408,1401,1362,1282,1167,1110,1052,1037,1057,1104,1119,1139,1140,1140,1136,1121,1095])],
  ['#fdf160', rows([1568,1563,1559,1558,1557,1553,1547,1542,1535,1520,1509,1502,1498,1491,1483,1477,1473,1463,1458,1461,1460,1455,1457,1459,1457,1460,1463,1467,1468,1470,1475,1478,1476,1472,1467,1458,1447,1442,1438,1431,1419,1409,1383,1343,1292,1257,1226,1199,1169,1140,1116,1096,1088,1098,1120,1121,1117])],
  ['#b412ac', [[0,1573],[3,1567],[5,1560],[8,1552],[9,1545],[12,1530],[14,1522],[16,1510],[18,1497],[20,1485],[21,1479],[22,1478],[23,1476],[24,1471],[26,1467],[28,1463],[29,1466],[31,1467],[32,1467],[33,1465],[34,1462],[35,1459],[36,1455],[38,1453],[39,1451],[40,1447],[41,1444],[42,1429],[43,1407],[44,1380],[45,1358],[46,1337],[47,1319],[48,1302],[49,1284],[50,1267],[51,1252],[52,1235],[53,1220],[54,1207],[55,1190],[56,1172]]],
  ['#149414', [[0,1575],[3,1568],[6,1565],[8,1562],[10,1553],[12,1545],[14,1537],[17,1524],[19,1516],[21,1507],[22,1505],[25,1498],[27,1490],[29,1484],[31,1479],[32,1477],[33,1474],[35,1466],[37,1457],[38,1454],[39,1454],[40,1451],[41,1448],[42,1439],[43,1425],[44,1406],[45,1392],[46,1379],[48,1358],[50,1336],[51,1328],[52,1315],[54,1293],[56,1264]]]
];
const volumeLines = [
  ['#fbe92a', rows([1905,1887,1870,1860,1855,1847,1857,1865,1862,1838,1837,1838,1840,1842,1861,1867,1865,1857,1857,1861,1850,1835,1832,1830,1819,1830,1852,1863,1870,1883,1890,1879,1868,1852,1836,1821,1809,1814,1828,1842,1836,1844,1822,1815,1769,1754,1742,1755,1757,1787,1803,1817,1817,1811,1807,1801,1795])],
  ['#ec1bdc', rows([1897,1887,1881,1881,1881,1877,1872,1868,1862,1847,1841,1847,1852,1852,1849,1851,1851,1848,1849,1861,1859,1852,1844,1843,1840,1841,1844,1848,1849,1851,1860,1866,1866,1861,1860,1855,1844,1841,1840,1839,1828,1827,1819,1822,1805,1795,1794,1790,1786,1778,1779,1780,1786,1784,1797,1801,1806])],
  ['#149414', [[0,1900],[1,1894],[2,1891],[4,1888],[6,1881],[8,1878],[9,1872],[10,1869],[12,1867],[13,1867],[16,1862],[17,1857],[19,1854],[20,1850],[22,1849],[23,1848],[24,1845],[26,1848],[27,1848],[28,1851],[29,1855],[30,1859],[31,1858],[33,1852],[35,1848],[36,1844],[37,1845],[39,1845],[40,1844],[41,1847],[42,1843],[43,1841],[44,1833],[45,1825],[46,1819],[47,1816],[48,1813],[49,1808],[50,1803],[51,1803],[53,1803],[54,1801],[55,1798],[56,1800]]]
];

const line = ([color, pts]) =>
  `<polyline fill="none" stroke="${color}" stroke-width="4" stroke-linejoin="round" points="${pts.map(([i, y]) => x(i) + ',' + y).join(' ')}"/>`;

let candles = '', volumes = '', ticks = '';
days.forEach(([kind, high, top, bottom, low, vol, volKind], i) => {
  const cx = x(i);
  if (kind === 'r') {
    candles += `<path d="M${cx} ${high}V${top}M${cx} ${bottom}V${low}" stroke="${RED}" stroke-width="2"/>` +
      `<rect x="${cx - 8}" y="${top}" width="16" height="${bottom - top}" fill="none" stroke="${RED}" stroke-width="2"/>`;
  } else {
    candles += `<path d="M${cx} ${high}V${low}" stroke="${CYAN}" stroke-width="2"/>` +
      `<rect x="${cx - 7}" y="${top}" width="15" height="${bottom - top}" fill="${CYAN}"/>`;
  }
  volumes += (volKind || kind) === 'r'
    ? `<rect x="${cx - 8}" y="${vol + 1}" width="20" height="${1941 - vol}" fill="none" stroke="${RED}" stroke-width="3"/>`
    : `<rect x="${cx - 9}" y="${vol}" width="19" height="${1941 - vol}" fill="${CYAN}"/>`;
  if (i >= 10) {
    const major = i === 16 || i === 36 || i === 56;
    const fade = Math.min(1, (i - 9) / 4);
    ticks += `<path d="M${cx + 1} 1944V${major ? 1962 : 1955}" stroke="#b4b4b4" stroke-width="${major ? 4 : 2}" opacity="${fade}"/>`;
  }
});
volumes += '<path d="M1132 1942V1795H1152V1942" fill="none" stroke="#fbe92a" stroke-width="3" stroke-dasharray="8 4"/>';

document.getElementById('candles').innerHTML = candles;
document.getElementById('averages').innerHTML = priceLines.map(line).join('');
document.getElementById('volumes').innerHTML = volumes + volumeLines.map(line).join('');
document.getElementById('ticks').innerHTML = ticks;
```
